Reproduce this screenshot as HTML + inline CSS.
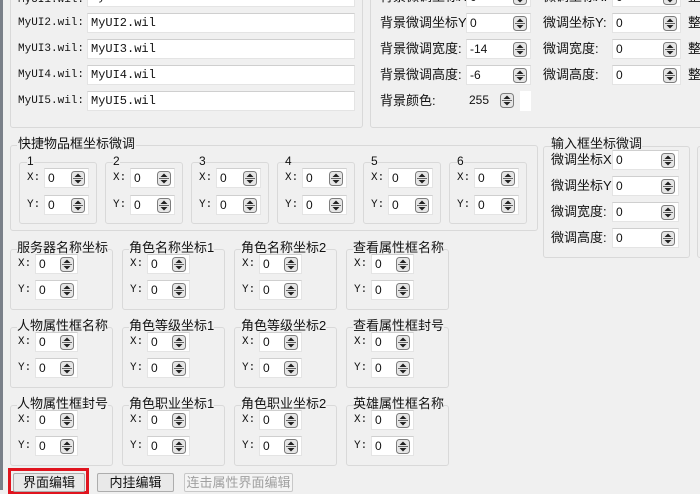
<!DOCTYPE html>
<html><head><meta charset="utf-8">
<style>
*{box-sizing:border-box;margin:0;padding:0}
body{width:700px;height:490px;overflow:hidden;background:#f0f0f0;position:relative;font-family:"Liberation Sans","Noto Sans CJK SC",sans-serif;font-size:12px;color:#111}
.a{position:absolute;white-space:nowrap}
.g{position:absolute;border:1px solid #d9d9d9;border-radius:3px}
.m{font-family:"Liberation Mono","Noto Sans CJK SC",monospace;font-size:11px}
.in{position:absolute;background:#fff;border:1px solid #e4e4e4;border-top-color:#cfcfcf;height:20px;line-height:18px;padding-left:3px;font-size:12px}
.sp{position:absolute;width:14px;height:15px;right:3px;top:2px}
.t{font-size:13px}
.edge{position:absolute;left:0;top:0;width:3px;height:490px;background:#7a8089}
.btn{position:absolute;height:19px;border:1px solid #adadad;border-radius:2px;background:#e9e9e9;font-size:13px;text-align:center;line-height:18px}
</style></head><body>
<svg width="0" height="0" style="position:absolute"><defs><symbol id="s" viewBox="0 0 14 15"><rect x="0.5" y="0.5" width="13" height="14" rx="3" fill="#e6e6e6" stroke="#7d7d7d"/><line x1="2" y1="7.5" x2="12" y2="7.5" stroke="#666"/><path d="M3.5 6L7 2.5L10.5 6Z" fill="#222"/><path d="M3.5 9L7 12.5L10.5 9Z" fill="#222"/></symbol></defs></svg>
<div class="edge"></div>

<!-- top left group -->
<div class="g" style="left:10px;top:-10px;width:353px;height:138px"></div>
<div class="a m" style="left:18px;top:-10px;line-height:20px">MyUI1.wil:</div><div class="in m" style="left:87px;top:-13px;width:268px">MyUI1.wil</div>
<div class="a m" style="left:18px;top:13px;line-height:20px">MyUI2.wil:</div><div class="in m" style="left:87px;top:13px;width:268px">MyUI2.wil</div>
<div class="a m" style="left:18px;top:39px;line-height:20px">MyUI3.wil:</div><div class="in m" style="left:87px;top:39px;width:268px">MyUI3.wil</div>
<div class="a m" style="left:18px;top:65px;line-height:20px">MyUI4.wil:</div><div class="in m" style="left:87px;top:65px;width:268px">MyUI4.wil</div>
<div class="a m" style="left:18px;top:91px;line-height:20px">MyUI5.wil:</div><div class="in m" style="left:87px;top:91px;width:268px">MyUI5.wil</div>

<!-- top right group -->
<div class="g" style="left:370px;top:-10px;width:340px;height:138px"></div>
<div class="a t" style="left:380px;top:-13px;line-height:20px">背景微调坐标X</div><div class="in" style="left:466px;top:-13px;width:65px">0<svg class="sp"><use href="#s"/></svg></div>
<div class="a t" style="left:543px;top:-13px;line-height:20px">微调坐标X:</div><div class="in" style="left:612px;top:-13px;width:69px">0<svg class="sp"><use href="#s"/></svg></div>
<div class="a t" style="left:380px;top:13px;line-height:20px">背景微调坐标Y</div><div class="in" style="left:466px;top:13px;width:65px">0<svg class="sp"><use href="#s"/></svg></div>
<div class="a t" style="left:543px;top:13px;line-height:20px">微调坐标Y:</div><div class="in" style="left:612px;top:13px;width:69px">0<svg class="sp"><use href="#s"/></svg></div>
<div class="a t" style="left:380px;top:39px;line-height:20px">背景微调宽度:</div><div class="in" style="left:466px;top:39px;width:65px">-14<svg class="sp"><use href="#s"/></svg></div>
<div class="a t" style="left:543px;top:39px;line-height:20px">微调宽度:</div><div class="in" style="left:612px;top:39px;width:69px">0<svg class="sp"><use href="#s"/></svg></div>
<div class="a t" style="left:380px;top:65px;line-height:20px">背景微调高度:</div><div class="in" style="left:466px;top:65px;width:65px">-6<svg class="sp"><use href="#s"/></svg></div>
<div class="a t" style="left:543px;top:65px;line-height:20px">微调高度:</div><div class="in" style="left:612px;top:65px;width:69px">0<svg class="sp"><use href="#s"/></svg></div>
<div class="a t" style="left:688px;top:-13px;line-height:20px">整</div>
<div class="a t" style="left:688px;top:13px;line-height:20px">整</div>
<div class="a t" style="left:688px;top:39px;line-height:20px">整</div>
<div class="a t" style="left:688px;top:65px;line-height:20px">整</div>
<div class="a t" style="left:380px;top:91px;line-height:20px">背景颜色:</div><div class="in" style="left:466px;top:91px;width:51px;border:none;background:transparent">255<svg class="sp"><use href="#s"/></svg></div>
<div class="a" style="left:520px;top:91px;width:11px;height:20px;background:#fff"></div>

<!-- quick items -->
<div class="g" style="left:10px;top:145px;width:528px;height:86px"></div>
<div class="a t" style="left:17px;top:135px;background:#f0f0f0;padding:0 1px;line-height:18px">快捷物品框坐标微调</div>

<div class="g" style="left:19px;top:162px;width:78px;height:62px"></div><div class="a" style="left:27px;top:154px;background:#f0f0f0;line-height:14px">1</div>
<div class="a m" style="left:27px;top:168px;line-height:20px">X:</div><div class="in" style="left:44px;top:168px;width:45px">0<svg class="sp"><use href="#s"/></svg></div>
<div class="a m" style="left:27px;top:195px;line-height:20px">Y:</div><div class="in" style="left:44px;top:195px;width:45px">0<svg class="sp"><use href="#s"/></svg></div>

<div class="g" style="left:105px;top:162px;width:78px;height:62px"></div><div class="a" style="left:113px;top:154px;background:#f0f0f0;line-height:14px">2</div>
<div class="a m" style="left:113px;top:168px;line-height:20px">X:</div><div class="in" style="left:130px;top:168px;width:45px">0<svg class="sp"><use href="#s"/></svg></div>
<div class="a m" style="left:113px;top:195px;line-height:20px">Y:</div><div class="in" style="left:130px;top:195px;width:45px">0<svg class="sp"><use href="#s"/></svg></div>

<div class="g" style="left:191px;top:162px;width:78px;height:62px"></div><div class="a" style="left:199px;top:154px;background:#f0f0f0;line-height:14px">3</div>
<div class="a m" style="left:199px;top:168px;line-height:20px">X:</div><div class="in" style="left:216px;top:168px;width:45px">0<svg class="sp"><use href="#s"/></svg></div>
<div class="a m" style="left:199px;top:195px;line-height:20px">Y:</div><div class="in" style="left:216px;top:195px;width:45px">0<svg class="sp"><use href="#s"/></svg></div>

<div class="g" style="left:277px;top:162px;width:78px;height:62px"></div><div class="a" style="left:285px;top:154px;background:#f0f0f0;line-height:14px">4</div>
<div class="a m" style="left:285px;top:168px;line-height:20px">X:</div><div class="in" style="left:302px;top:168px;width:45px">0<svg class="sp"><use href="#s"/></svg></div>
<div class="a m" style="left:285px;top:195px;line-height:20px">Y:</div><div class="in" style="left:302px;top:195px;width:45px">0<svg class="sp"><use href="#s"/></svg></div>

<div class="g" style="left:363px;top:162px;width:78px;height:62px"></div><div class="a" style="left:371px;top:154px;background:#f0f0f0;line-height:14px">5</div>
<div class="a m" style="left:371px;top:168px;line-height:20px">X:</div><div class="in" style="left:388px;top:168px;width:45px">0<svg class="sp"><use href="#s"/></svg></div>
<div class="a m" style="left:371px;top:195px;line-height:20px">Y:</div><div class="in" style="left:388px;top:195px;width:45px">0<svg class="sp"><use href="#s"/></svg></div>

<div class="g" style="left:449px;top:162px;width:78px;height:62px"></div><div class="a" style="left:457px;top:154px;background:#f0f0f0;line-height:14px">6</div>
<div class="a m" style="left:457px;top:168px;line-height:20px">X:</div><div class="in" style="left:474px;top:168px;width:45px">0<svg class="sp"><use href="#s"/></svg></div>
<div class="a m" style="left:457px;top:195px;line-height:20px">Y:</div><div class="in" style="left:474px;top:195px;width:45px">0<svg class="sp"><use href="#s"/></svg></div>

<!-- input frame -->
<div class="g" style="left:543px;top:146px;width:147px;height:112px"></div>
<div class="a t" style="left:551px;top:135px;background:#f0f0f0;line-height:18px">输入框坐标微调</div>
<div class="g" style="left:697px;top:146px;width:10px;height:112px"></div>
<div class="a t" style="left:551px;top:150px;line-height:20px">微调坐标X</div><div class="in" style="left:612px;top:150px;width:67px">0<svg class="sp"><use href="#s"/></svg></div>
<div class="a t" style="left:551px;top:176px;line-height:20px">微调坐标Y</div><div class="in" style="left:612px;top:176px;width:67px">0<svg class="sp"><use href="#s"/></svg></div>
<div class="a t" style="left:551px;top:202px;line-height:20px">微调宽度:</div><div class="in" style="left:612px;top:202px;width:67px">0<svg class="sp"><use href="#s"/></svg></div>
<div class="a t" style="left:551px;top:228px;line-height:20px">微调高度:</div><div class="in" style="left:612px;top:228px;width:67px">0<svg class="sp"><use href="#s"/></svg></div>

<!-- grid row 1 -->
<div class="g" style="left:10px;top:249px;width:103px;height:61px"></div><div class="a t" style="left:17px;top:239px;background:#f0f0f0;line-height:18px">服务器名称坐标</div>
<div class="a m" style="left:18px;top:254px;line-height:20px">X:</div><div class="in" style="left:35px;top:254px;width:43px">0<svg class="sp"><use href="#s"/></svg></div>
<div class="a m" style="left:18px;top:280px;line-height:20px">Y:</div><div class="in" style="left:35px;top:280px;width:43px">0<svg class="sp"><use href="#s"/></svg></div>
<div class="g" style="left:122px;top:249px;width:103px;height:61px"></div><div class="a t" style="left:129px;top:239px;background:#f0f0f0;line-height:18px">角色名称坐标1</div>
<div class="a m" style="left:130px;top:254px;line-height:20px">X:</div><div class="in" style="left:147px;top:254px;width:43px">0<svg class="sp"><use href="#s"/></svg></div>
<div class="a m" style="left:130px;top:280px;line-height:20px">Y:</div><div class="in" style="left:147px;top:280px;width:43px">0<svg class="sp"><use href="#s"/></svg></div>
<div class="g" style="left:234px;top:249px;width:103px;height:61px"></div><div class="a t" style="left:241px;top:239px;background:#f0f0f0;line-height:18px">角色名称坐标2</div>
<div class="a m" style="left:242px;top:254px;line-height:20px">X:</div><div class="in" style="left:259px;top:254px;width:43px">0<svg class="sp"><use href="#s"/></svg></div>
<div class="a m" style="left:242px;top:280px;line-height:20px">Y:</div><div class="in" style="left:259px;top:280px;width:43px">0<svg class="sp"><use href="#s"/></svg></div>
<div class="g" style="left:346px;top:249px;width:103px;height:61px"></div><div class="a t" style="left:353px;top:239px;background:#f0f0f0;line-height:18px">查看属性框名称</div>
<div class="a m" style="left:354px;top:254px;line-height:20px">X:</div><div class="in" style="left:371px;top:254px;width:43px">0<svg class="sp"><use href="#s"/></svg></div>
<div class="a m" style="left:354px;top:280px;line-height:20px">Y:</div><div class="in" style="left:371px;top:280px;width:43px">0<svg class="sp"><use href="#s"/></svg></div>

<!-- grid row 2 -->
<div class="g" style="left:10px;top:327px;width:103px;height:61px"></div><div class="a t" style="left:17px;top:317px;background:#f0f0f0;line-height:18px">人物属性框名称</div>
<div class="a m" style="left:18px;top:332px;line-height:20px">X:</div><div class="in" style="left:35px;top:332px;width:43px">0<svg class="sp"><use href="#s"/></svg></div>
<div class="a m" style="left:18px;top:358px;line-height:20px">Y:</div><div class="in" style="left:35px;top:358px;width:43px">0<svg class="sp"><use href="#s"/></svg></div>
<div class="g" style="left:122px;top:327px;width:103px;height:61px"></div><div class="a t" style="left:129px;top:317px;background:#f0f0f0;line-height:18px">角色等级坐标1</div>
<div class="a m" style="left:130px;top:332px;line-height:20px">X:</div><div class="in" style="left:147px;top:332px;width:43px">0<svg class="sp"><use href="#s"/></svg></div>
<div class="a m" style="left:130px;top:358px;line-height:20px">Y:</div><div class="in" style="left:147px;top:358px;width:43px">0<svg class="sp"><use href="#s"/></svg></div>
<div class="g" style="left:234px;top:327px;width:103px;height:61px"></div><div class="a t" style="left:241px;top:317px;background:#f0f0f0;line-height:18px">角色等级坐标2</div>
<div class="a m" style="left:242px;top:332px;line-height:20px">X:</div><div class="in" style="left:259px;top:332px;width:43px">0<svg class="sp"><use href="#s"/></svg></div>
<div class="a m" style="left:242px;top:358px;line-height:20px">Y:</div><div class="in" style="left:259px;top:358px;width:43px">0<svg class="sp"><use href="#s"/></svg></div>
<div class="g" style="left:346px;top:327px;width:103px;height:61px"></div><div class="a t" style="left:353px;top:317px;background:#f0f0f0;line-height:18px">查看属性框封号</div>
<div class="a m" style="left:354px;top:332px;line-height:20px">X:</div><div class="in" style="left:371px;top:332px;width:43px">0<svg class="sp"><use href="#s"/></svg></div>
<div class="a m" style="left:354px;top:358px;line-height:20px">Y:</div><div class="in" style="left:371px;top:358px;width:43px">0<svg class="sp"><use href="#s"/></svg></div>

<!-- grid row 3 -->
<div class="g" style="left:10px;top:405px;width:103px;height:61px"></div><div class="a t" style="left:17px;top:395px;background:#f0f0f0;line-height:18px">人物属性框封号</div>
<div class="a m" style="left:18px;top:410px;line-height:20px">X:</div><div class="in" style="left:35px;top:410px;width:43px">0<svg class="sp"><use href="#s"/></svg></div>
<div class="a m" style="left:18px;top:436px;line-height:20px">Y:</div><div class="in" style="left:35px;top:436px;width:43px">0<svg class="sp"><use href="#s"/></svg></div>
<div class="g" style="left:122px;top:405px;width:103px;height:61px"></div><div class="a t" style="left:129px;top:395px;background:#f0f0f0;line-height:18px">角色职业坐标1</div>
<div class="a m" style="left:130px;top:410px;line-height:20px">X:</div><div class="in" style="left:147px;top:410px;width:43px">0<svg class="sp"><use href="#s"/></svg></div>
<div class="a m" style="left:130px;top:436px;line-height:20px">Y:</div><div class="in" style="left:147px;top:436px;width:43px">0<svg class="sp"><use href="#s"/></svg></div>
<div class="g" style="left:234px;top:405px;width:103px;height:61px"></div><div class="a t" style="left:241px;top:395px;background:#f0f0f0;line-height:18px">角色职业坐标2</div>
<div class="a m" style="left:242px;top:410px;line-height:20px">X:</div><div class="in" style="left:259px;top:410px;width:43px">0<svg class="sp"><use href="#s"/></svg></div>
<div class="a m" style="left:242px;top:436px;line-height:20px">Y:</div><div class="in" style="left:259px;top:436px;width:43px">0<svg class="sp"><use href="#s"/></svg></div>
<div class="g" style="left:346px;top:405px;width:103px;height:61px"></div><div class="a t" style="left:353px;top:395px;background:#f0f0f0;line-height:18px">英雄属性框名称</div>
<div class="a m" style="left:354px;top:410px;line-height:20px">X:</div><div class="in" style="left:371px;top:410px;width:43px">0<svg class="sp"><use href="#s"/></svg></div>
<div class="a m" style="left:354px;top:436px;line-height:20px">Y:</div><div class="in" style="left:371px;top:436px;width:43px">0<svg class="sp"><use href="#s"/></svg></div>

<!-- buttons -->
<div class="a" style="left:8px;top:468px;width:81px;height:26px;border:3px solid #e0141e"></div>
<div class="btn" style="left:13px;top:473px;width:72px">界面编辑</div>
<div class="btn" style="left:97px;top:473px;width:77px">内挂编辑</div>
<div class="btn" style="left:184px;top:473px;width:109px;color:#a0a0a0;border-color:#c8c8c8;background:#f4f4f4">连击属性界面编辑</div>
</body></html>
